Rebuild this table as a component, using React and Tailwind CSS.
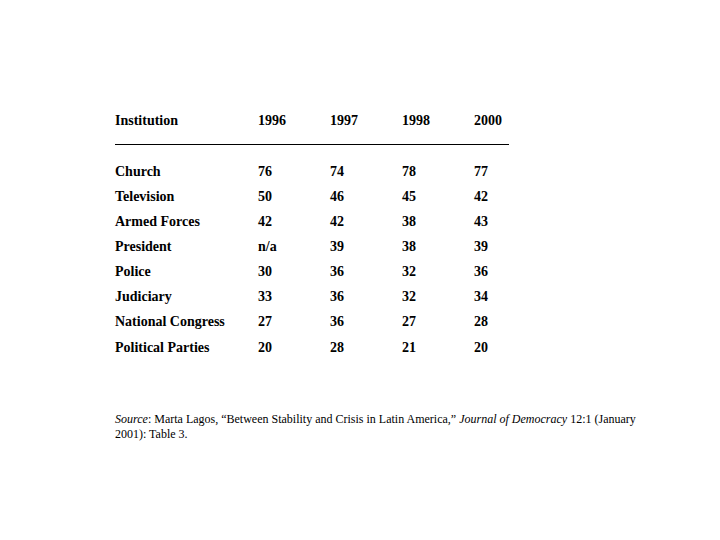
import React from "react";

const rows = [
  ["Church", "76", "74", "78", "77"],
  ["Television", "50", "46", "45", "42"],
  ["Armed Forces", "42", "42", "38", "43"],
  ["President", "n/a", "39", "38", "39"],
  ["Police", "30", "36", "32", "36"],
  ["Judiciary", "33", "36", "32", "34"],
  ["National Congress", "27", "36", "27", "28"],
  ["Political Parties", "20", "28", "21", "20"],
];

function Row({ cells, extra = "" }) {
  return (
    <div className={"grid grid-cols-[143px_72px_72px_72px_35px] h-[25px] items-center " + extra}>
      {cells.map((c, i) => (
        <div key={i} className="whitespace-nowrap">{c}</div>
      ))}
    </div>
  );
}

export default function App() {
  return (
    <div className="w-[720px] h-[540px] bg-white text-black overflow-hidden">
      <div className="pt-[108px] pl-[115px]">
        <div className="w-[394px] font-['Liberation_Serif',serif] font-bold text-[14px] leading-[25px]">
          <Row cells={["Institution", "1996", "1997", "1998", "2000"]} />
          <div className="mt-[11px] border-t border-black"></div>
          <div className="mt-[14px]">
            {rows.map((r, i) => (
              <Row key={i} cells={r} extra={i === rows.length - 1 ? "mt-[1px]" : ""} />
            ))}
          </div>
        </div>
        <div className="mt-[52px] w-[540px] font-['Liberation_Serif',serif] text-[12px] leading-[15px]">
          <span className="italic">Source</span>: Marta Lagos, “Between Stability and Crisis in Latin America,” <span className="italic">Journal of Democracy</span> 12:1 (January 2001): Table 3.
        </div>
      </div>
    </div>
  );
}
